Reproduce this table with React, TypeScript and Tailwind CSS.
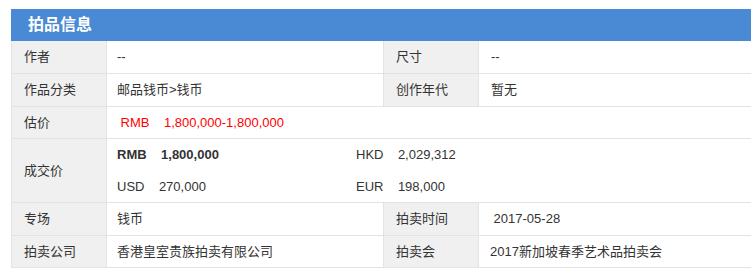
import { Fragment } from 'react'

const rows = [
    { a: '作者', b: '--', c: '尺寸', d: '--' },
    { a: '作品分类', b: '邮品钱币>钱币', c: '创作年代', d: '暂无' },
]

const bottomRows = [
    { a: '专场', b: '钱币', c: '拍卖时间', d: ' 2017-05-28', h: 'h-[32px]' },
    { a: '拍卖公司', b: '香港皇室贵族拍卖有限公司', c: '拍卖会', d: '2017新加坡春季艺术品拍卖会', h: 'h-[31px]' },
]

const label = 'bg-[#f0f0f0] flex items-center pl-[12px]'
const value = 'bg-white flex items-center whitespace-pre'

export default function App() {
    return (
        <div
            className="w-[751px] h-[280px] bg-white pt-[9px] pl-[11px] text-[13px] text-[#333]"
            style={{ fontFamily: '"Liberation Sans", "Noto Sans CJK SC", sans-serif' }}
        >
            {/* 标题 */}
            <div className="bg-[#4a89d4] h-[32px] flex items-center pl-[17px]">
                <h2 className="text-white text-[16px] font-bold">拍品信息</h2>
            </div>

            {/* 表格 */}
            <div className="bg-[#e3e3e3] grid grid-cols-[94px_276px_94px_1fr] gap-px pl-px pb-px">
                {rows.map((r) => (
                    <Fragment key={r.a}>
                        <div className={`${label} h-[32px]`}>{r.a}</div>
                        <div className={`${value} pl-[10px]`}>{r.b}</div>
                        <div className={label}>{r.c}</div>
                        <div className={`${value} pl-[12px]`}>{r.d}</div>
                    </Fragment>
                ))}

                <div className={`${label} h-[31px]`}>估价</div>
                <div className={`${value} col-span-3 pl-[10px] text-[#ff0000]`}>
                    {' RMB    1,800,000-1,800,000'}
                </div>

                <div className={`${label} h-[63px]`}>成交价</div>
                <div className="bg-white col-span-3 pl-[10px] flex flex-col justify-center whitespace-pre">
                    <div className="h-[32px] flex items-center">
                        <span className="w-[239px] font-bold">{'RMB    1,800,000'}</span>
                        <span>{'HKD    2,029,312'}</span>
                    </div>
                    <div className="h-[31px] flex items-center">
                        <span className="w-[239px]">{'USD    270,000'}</span>
                        <span>{'EUR    198,000'}</span>
                    </div>
                </div>

                {bottomRows.map((r) => (
                    <Fragment key={r.a}>
                        <div className={`${label} ${r.h}`}>{r.a}</div>
                        <div className={`${value} pl-[10px]`}>{r.b}</div>
                        <div className={label}>{r.c}</div>
                        <div className={`${value} pl-[11px]`}>{r.d}</div>
                    </Fragment>
                ))}
            </div>
        </div>
    )
}
